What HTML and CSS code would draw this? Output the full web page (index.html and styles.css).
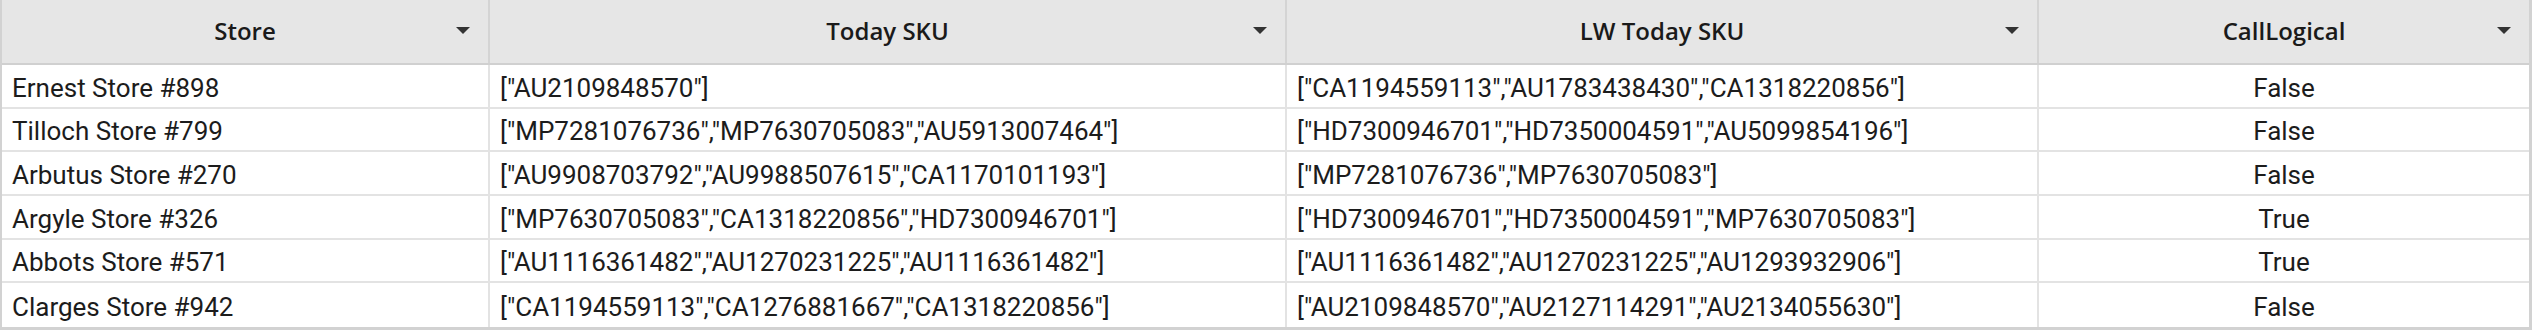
FILE: index.html
```html
<!DOCTYPE html>
<html lang="en">
<head>
<meta charset="utf-8">
<title>Store SKU table</title>
<link rel="stylesheet" href="styles.css">
</head>
<body>
<div class="table">
  <div class="row head">
    <div class="cell hcell"><span>Store</span><svg class="caret" viewBox="0 0 14 7" width="14" height="7"><polygon points="0,0 14,0 7,7"/></svg></div>
    <div class="cell hcell"><span>Today SKU</span><svg class="caret" viewBox="0 0 14 7" width="14" height="7"><polygon points="0,0 14,0 7,7"/></svg></div>
    <div class="cell hcell"><span>LW Today SKU</span><svg class="caret" viewBox="0 0 14 7" width="14" height="7"><polygon points="0,0 14,0 7,7"/></svg></div>
    <div class="cell hcell"><span>CallLogical</span><svg class="caret" viewBox="0 0 14 7" width="14" height="7"><polygon points="0,0 14,0 7,7"/></svg></div>
  </div>
  <div class="row">
    <div class="cell">Ernest Store #898</div>
    <div class="cell">["AU2109848570"]</div>
    <div class="cell">["CA1194559113","AU1783438430","CA1318220856"]</div>
    <div class="cell center">False</div>
  </div>
  <div class="row">
    <div class="cell">Tilloch Store #799</div>
    <div class="cell">["MP7281076736","MP7630705083","AU5913007464"]</div>
    <div class="cell">["HD7300946701","HD7350004591","AU5099854196"]</div>
    <div class="cell center">False</div>
  </div>
  <div class="row">
    <div class="cell">Arbutus Store #270</div>
    <div class="cell">["AU9908703792","AU9988507615","CA1170101193"]</div>
    <div class="cell">["MP7281076736","MP7630705083"]</div>
    <div class="cell center">False</div>
  </div>
  <div class="row">
    <div class="cell">Argyle Store #326</div>
    <div class="cell">["MP7630705083","CA1318220856","HD7300946701"]</div>
    <div class="cell">["HD7300946701","HD7350004591","MP7630705083"]</div>
    <div class="cell center">True</div>
  </div>
  <div class="row">
    <div class="cell">Abbots Store #571</div>
    <div class="cell">["AU1116361482","AU1270231225","AU1116361482"]</div>
    <div class="cell">["AU1116361482","AU1270231225","AU1293932906"]</div>
    <div class="cell center">True</div>
  </div>
  <div class="row last">
    <div class="cell">Clarges Store #942</div>
    <div class="cell">["CA1194559113","CA1276881667","CA1318220856"]</div>
    <div class="cell">["AU2109848570","AU2127114291","AU2134055630"]</div>
    <div class="cell center">False</div>
  </div>
</div>
</body>
</html>
```
FILE: styles.css
```css
* { box-sizing: border-box; }
html, body { margin: 0; padding: 0; background: #ffffff; }
body { width: 2532px; height: 330px; overflow: hidden; }

.table {
  width: 2532px;
  border-left: 2px solid #d2d2d2;
  border-right: 3px solid #d2d2d2;
  border-bottom: 3px solid #d2d2d2;
  font-family: Roboto, "Liberation Sans", sans-serif;
  font-size: 26px;
  color: #1c1c1c;
}

.row {
  display: grid;
  grid-template-columns: 488px 797px 752px 490px;
  height: 43.667px;
  border-bottom: 2px solid #e3e3e3;
}
.row.last { border-bottom: none; }

.row.head {
  height: 65px;
  background: #e6e6e6;
  border-bottom: 2px solid #d0d0d0;
}

.cell {
  display: flex;
  align-items: center;
  padding: 4px 10px 0 10px;
  border-right: 2px solid #e3e3e3;
  white-space: nowrap;
  overflow: hidden;
}
.cell:last-child { border-right: none; }
.cell.center { justify-content: center; }

.hcell {
  position: relative;
  justify-content: center;
  padding: 0 10px 2px 10px;
  border-right-color: #d4d4d4;
  font-family: "Open Sans", "Noto Sans", sans-serif;
  font-weight: 600;
  font-size: 24px;
  color: #1a1a1a;
}

.caret {
  position: absolute;
  right: 18px;
  top: 27px;
  fill: #333333;
}
```
